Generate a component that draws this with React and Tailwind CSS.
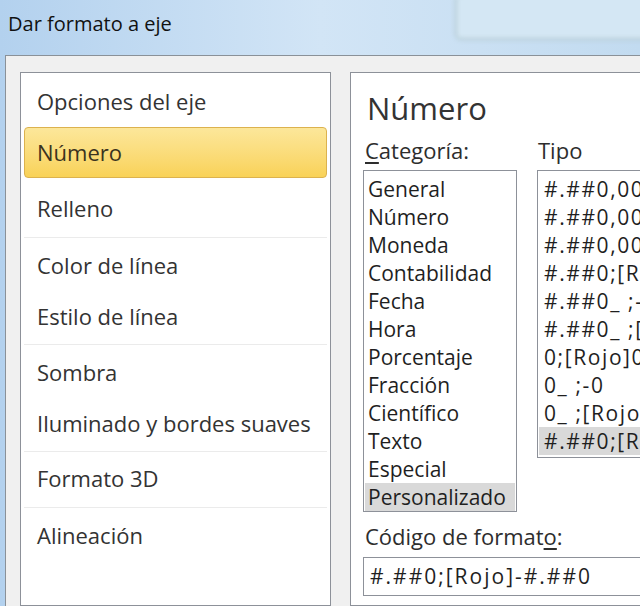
import React from "react";

const FONT = { fontFamily: '"Open Sans", "Noto Sans", sans-serif' };

const navGroups = [
  { items: ["Opciones del eje", "Número"], after: "h-[5px]", line: false },
  { items: ["Relleno"], after: "h-[6px]", line: true },
  { items: ["Color de línea", "Estilo de línea"], after: "h-[5px]", line: true },
  { items: ["Sombra", "Iluminado y bordes suaves"], after: "h-[4px]", line: true },
  { items: ["Formato 3D"], after: "h-[6px]", line: true },
  { items: ["Alineación"], after: null, line: false },
];

const categorias = [
  "General",
  "Número",
  "Moneda",
  "Contabilidad",
  "Fecha",
  "Hora",
  "Porcentaje",
  "Fracción",
  "Científico",
  "Texto",
  "Especial",
  "Personalizado",
];

const tipos = [
  "#.##0,00 €",
  "#.##0,00 €;-#.##0,00 €",
  "#.##0,00 €;[Rojo]-#.##0,00 €",
  "#.##0;[Rojo]#.##0",
  "#.##0_ ;-#.##0 ",
  "#.##0_ ;[Rojo]-#.##0 ",
  "0;[Rojo]0",
  "0_ ;-0",
  "0_ ;[Rojo]-0 ",
  "#.##0;[Rojo]-#.##0",
];

const NavItem = ({ label, active }) => {
  if (active) {
    return (
      <div className="h-[51px] px-[3px] py-0">
        <div className="h-full flex items-center pl-[12px] rounded-[4px] border border-[#dcb24e] bg-gradient-to-b from-[#fce79a] to-[#f9d257] text-[#3b3320] text-[22px]">
          {label}
        </div>
      </div>
    );
  }
  return (
    <div className="h-[51px] flex items-center pl-[16px] text-[22px] text-[#333333]">
      {label}
    </div>
  );
};

const Sidebar = () => (
  <div className="w-[311px] shrink-0 bg-white border border-[#8d9199] pt-[3px] flex flex-col">
    {navGroups.map((g, gi) => (
      <React.Fragment key={gi}>
        {g.items.map((it) => (
          <NavItem key={it} label={it} active={it === "Número"} />
        ))}
        {g.after && (
          <div className={`${g.after} flex items-center px-[3px]`}>
            {g.line && <div className="h-px w-full bg-[#ebebeb]"></div>}
          </div>
        )}
      </React.Fragment>
    ))}
  </div>
);

const NumberPanel = () => (
  <div className="w-[420px] shrink-0 bg-white border border-[#8d9199] pl-[12px] pt-[15px]">
    <div className="h-[40px] flex items-center text-[31px] text-[#333333] pl-[4px]">
      Número
    </div>
    <div className="flex mt-[8px]">
      <div className="w-[154px] shrink-0">
        <div className="h-[28px] flex items-center text-[22px] text-[#2d2d2d] pl-[2px]">
          <span>
            <u className="underline-offset-[3px]">C</u>ategoría:
          </span>
        </div>
        <div className="mt-[6px] h-[342px] border border-[#8d9199] pt-[4px] px-px">
          {categorias.map((c) => (
            <div
              key={c}
              className={`h-[28px] flex items-center pl-[3px] text-[21px] leading-none text-[#1f1f1f] ${
                c === "Personalizado" ? "bg-[#d9d9d9]" : ""
              }`}
            >
              {c}
            </div>
          ))}
        </div>
      </div>
      <div className="ml-[20px] flex-1 min-w-0">
        <div className="h-[28px] flex items-center text-[22px] text-[#2d2d2d] pl-px">
          Tipo
        </div>
        <div className="mt-[6px] h-[288px] border border-[#8d9199] pt-[4px] px-px overflow-hidden">
          {tipos.map((t, i) => (
            <div
              key={i}
              className={`h-[28px] flex items-center pl-[5px] text-[21px] tracking-[1.6px] leading-none text-[#1f1f1f] whitespace-pre ${
                i === tipos.length - 1 ? "bg-[#d9d9d9]" : ""
              }`}
            >
              {t}
            </div>
          ))}
        </div>
      </div>
    </div>
    <div className="mt-[10px] h-[28px] flex items-center text-[22px] text-[#2d2d2d] pl-[2px]">
      <span>
        Código de format<u className="underline-offset-[3px]">o</u>:
      </span>
    </div>
    <div className="mt-[7px] h-[39px] border border-[#8d9199] flex items-center pl-[6px] text-[21px] tracking-[2px] text-[#1f1f1f]">
      #.##0;[Rojo]-#.##0
    </div>
  </div>
);

export default function App() {
  return (
    <div
      style={FONT}
      className="w-[640px] h-[606px] overflow-hidden flex flex-col bg-gradient-to-r from-[#b3d1ee] via-[#d2e5f6] to-[#c2dbf0]"
    >
      <div className="relative h-[55px] shrink-0 flex items-center pl-[8px] pb-[8px]">
        <div className="absolute left-[455px] top-[-6px] w-[200px] h-[46px] rounded-[6px] border-2 border-[#b2c8cf] bg-[#d4e7f4] blur-[2px]"></div>
        <span className="relative text-[20px] text-[#111111]">Dar formato a eje</span>
      </div>
      <div className="flex-1 ml-[5px] border-l border-t border-[#8a9198] bg-[#f0f0f0] pl-[14px] pt-[16px] flex gap-[19px] overflow-hidden">
        <Sidebar />
        <NumberPanel />
      </div>
    </div>
  );
}
